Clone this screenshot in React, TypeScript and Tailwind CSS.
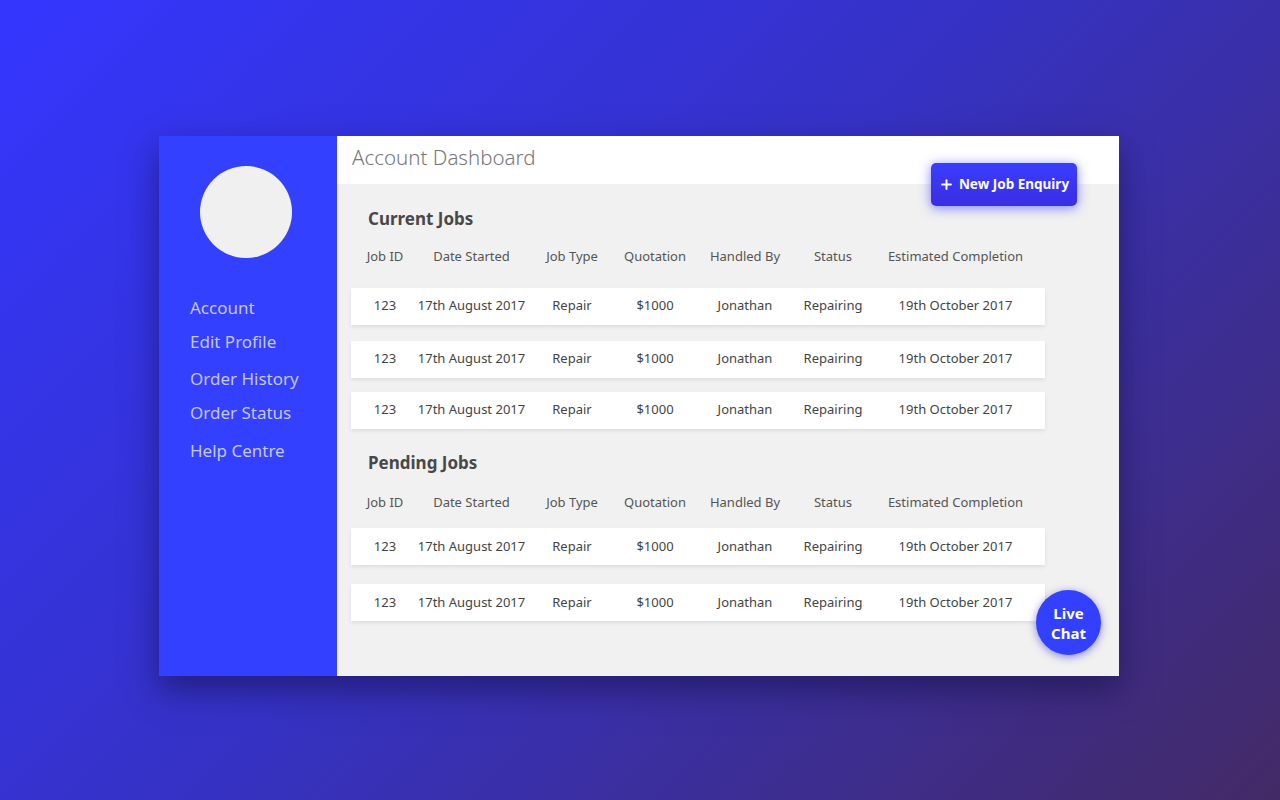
// 계정 대시보드 — 사이드바 + 진행/대기 작업 목록
import { Plus } from 'lucide-react';

type Job = {
  id: string;
  started: string;
  type: string;
  quote: string;
  handler: string;
  status: string;
  eta: string;
};

const job: Job = {
  id: '123',
  started: '17th August 2017',
  type: 'Repair',
  quote: '$1000',
  handler: 'Jonathan',
  status: 'Repairing',
  eta: '19th October 2017',
};

const headers = ['Job ID', 'Date Started', 'Job Type', 'Quotation', 'Handled By', 'Status', 'Estimated Completion'];
const cols = 'grid grid-cols-[68px_105px_96px_70px_110px_66px_179px] w-[694px]';

const nav = [
  { label: 'Account', mt: 'mt-0' },
  { label: 'Edit Profile', mt: 'mt-[10px]' },
  { label: 'Order History', mt: 'mt-[13px]' },
  { label: 'Order Status', mt: 'mt-[10px]' },
  { label: 'Help Centre', mt: 'mt-[14px]' },
];

function Cell({ children }: { children: React.ReactNode }) {
  return <div className="flex justify-center whitespace-nowrap">{children}</div>;
}

function HeaderRow() {
  return (
    <div className={`${cols} text-[13px] text-[#555]`}>
      {headers.map((h, i) => (
        <Cell key={i}>{h}</Cell>
      ))}
    </div>
  );
}

function JobRow({ j, className = '' }: { j: Job; className?: string }) {
  const vals = [j.id, j.started, j.type, j.quote, j.handler, j.status, j.eta];
  return (
    <div className={`${cols} ${className} h-[37px] items-center bg-white text-[13px] text-[#444] shadow-[0_2px_4px_rgba(0,0,0,0.08)]`}>
      {vals.map((v, i) => (
        <Cell key={i}>{v}</Cell>
      ))}
    </div>
  );
}

export default function App() {
  const font = { fontFamily: '"Noto Sans", "Open Sans", sans-serif' };
  return (
    <div
      style={font}
      className="w-[1280px] h-[800px] flex items-start pl-[159px] pt-[136px] bg-[linear-gradient(135deg,#3436ff_0%,#3532c8_45%,#432a66_100%)]"
    >
      <div className="flex w-[960px] h-[540px] shadow-[0_14px_30px_rgba(20,15,70,0.55)]">
        {/* 사이드바 */}
        <aside className="w-[178px] shrink-0 bg-[#3340ff] flex flex-col pt-[30px]">
          <div className="ml-[41px] w-[92px] h-[92px] rounded-full bg-[#f0f0f0]" />
          <nav className="flex flex-col pl-[31px] mt-[38px] text-[17px] text-[#c5c7e6]">
            {nav.map((n) => (
              <span key={n.label} className={`${n.mt} leading-[24px]`}>{n.label}</span>
            ))}
          </nav>
        </aside>

        {/* 본문 */}
        <main className="relative flex-1 bg-[#f1f1f1] flex flex-col">
          <header className="h-[48px] bg-white flex items-center px-[15px]">
            <h1 className="text-[20.5px] font-light text-[#777] -mt-[5px]">Account Dashboard</h1>
          </header>
          <button className="absolute left-[594px] top-[27px] h-[43px] w-[146px] rounded-[5px] bg-[linear-gradient(180deg,#3a3dff,#3a2ee2)] text-white text-[13.5px] font-bold flex items-center justify-center gap-[5px] shadow-[0_2px_12px_rgba(70,80,255,0.7)]">
            <Plus size={15} strokeWidth={3.2} />
            New Job Enquiry
          </button>

          <div className="pl-[14px] pt-[22px]">
            <h2 className="pl-[17px] text-[17px] font-bold text-[#484848] leading-[26px]">Current Jobs</h2>
            <div className="mt-[15px]">
              <HeaderRow />
            </div>
            <div className="mt-[21px] flex flex-col">
              <JobRow j={job} />
              <JobRow j={job} className="mt-[16px]" />
              <JobRow j={job} className="mt-[14px]" />
            </div>

            <h2 className="mt-[21px] pl-[17px] text-[17px] font-bold text-[#484848] leading-[26px]">Pending Jobs</h2>
            <div className="mt-[17px]">
              <HeaderRow />
            </div>
            <div className="mt-[16px] flex flex-col gap-[19px]">
              <JobRow j={job} />
              <JobRow j={job} />
            </div>
          </div>

          <button className="absolute left-[699px] top-[454px] w-[65px] h-[65px] rounded-full bg-[#3440ff] text-white text-[15px] font-bold leading-[20px] flex items-center justify-center shadow-[0_2px_8px_rgba(60,60,200,0.6)]">
            Live
            <br />
            Chat
          </button>
        </main>
      </div>
    </div>
  );
}
